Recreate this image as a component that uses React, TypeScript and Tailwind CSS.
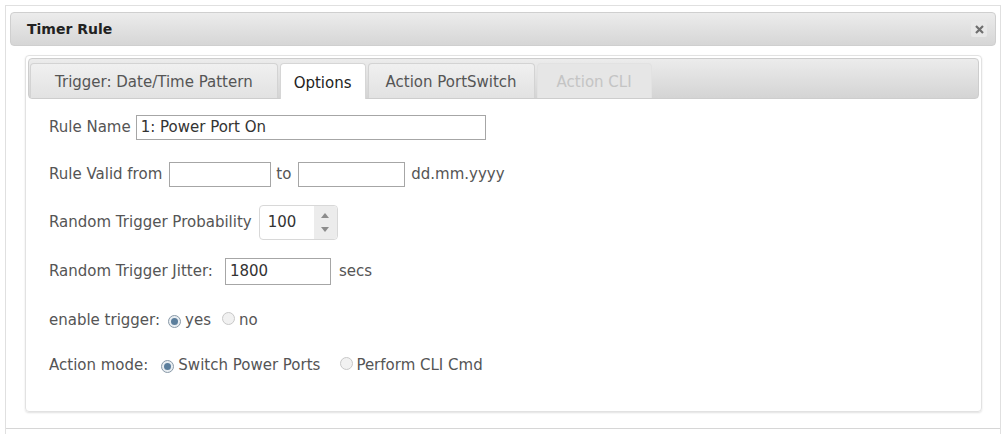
import React from "react";

const FONT = "font-['DejaVu_Sans',Verdana,sans-serif]";

function Radio({ checked }: { checked?: boolean }) {
  return (
    <span
      className={
        "inline-flex size-[13px] shrink-0 items-center justify-center rounded-full border " +
        (checked
          ? "border-[#8a9aa8] bg-[#e9eef2]"
          : "border-[#c8c8c8] bg-[#f1f1f1]")
      }
    >
      {checked && <span className="size-[7px] rounded-full bg-[#5b7e9c]" />}
    </span>
  );
}

function Tab({
  label,
  active,
  disabled,
  px,
}: {
  label: string;
  active?: boolean;
  disabled?: boolean;
  px: string;
}) {
  if (active) {
    return (
      <div
        className={
          "mb-[-1px] flex h-[36px] items-center rounded-t-[4px] border border-b-0 border-[#d6d6d6] bg-white pt-[3px] text-[#222] " +
          px
        }
      >
        {label}
      </div>
    );
  }
  return (
    <div
      className={
        "flex h-[35px] items-center rounded-t-[4px] border border-b-0 pt-[3px] " +
        px +
        " " +
        (disabled
          ? "border-[#e2e2e2] bg-[#e6e6e6] text-[#c4c4c4]"
          : "border-[#d3d3d3] bg-gradient-to-b from-[#f0f0f0] to-[#e2e2e2] text-[#555]")
      }
    >
      {label}
    </div>
  );
}

export default function App() {
  return (
    <div className={"h-[434px] w-[1006px] overflow-hidden bg-white pt-[5px] pl-[5px] " + FONT}>
      <div className="h-[440px] w-[996px] border border-[#e0e0e0] bg-white">
        {/* Title bar */}
        <div className="mx-[4px] mt-[6px] flex h-[34px] items-center justify-between rounded-[4px] border border-[#cfcfcf] bg-gradient-to-b from-[#ececec] to-[#d6d6d6] pr-[8px] pl-[16px]">
          <span className="text-[14px] font-bold text-[#222]">Timer Rule</span>
          <span className="flex size-[16px] items-center justify-center rounded-[2px] bg-[#e8e8e8]">
            <svg width="9" height="9" viewBox="0 0 9 9">
              <path d="M1 1 L8 8 M8 1 L1 8" stroke="#6f6f6f" strokeWidth="2.2" />
            </svg>
          </span>
        </div>

        {/* Tabs panel */}
        <div className="mt-[9px] ml-[19px] h-[357px] w-[957px] rounded-[4px] border border-[#e2e2e2] p-[2px] shadow-[0_1px_2px_rgba(0,0,0,0.12)]">
          <div className="flex h-[41px] items-end gap-[2px] rounded-[4px] border border-[#cdcdcd] bg-gradient-to-b from-[#ececec] to-[#d4d4d4] pl-[1px] text-[15px]">
            <Tab label="Trigger: Date/Time Pattern" px="px-[24px]" />
            <Tab label="Options" active px="px-[13px]" />
            <Tab label="Action PortSwitch" px="px-[17px]" />
            <Tab label="Action CLI" disabled px="px-[19px]" />
          </div>

          <div className="flex flex-col pt-[16px] pl-[21px] text-[15px] text-[#555]">
            <div className="flex h-[25px] items-center gap-[5px]">
              <span>Rule Name</span>
              <div className="flex h-[25px] w-[350px] items-center border border-[#a6a6a6] px-[4px] text-[#333]">
                1: Power Port On
              </div>
            </div>

            <div className="mt-[22px] flex h-[25px] items-center">
              <span>Rule Valid from</span>
              <div className="ml-[7px] h-[25px] w-[102px] border border-[#a6a6a6]" />
              <span className="ml-[5px]">to</span>
              <div className="ml-[7px] h-[25px] w-[107px] border border-[#a6a6a6]" />
              <span className="ml-[6px]">dd.mm.yyyy</span>
            </div>

            <div className="mt-[18px] flex h-[35px] items-center gap-[7px]">
              <span>Random Trigger Probability</span>
              <div className="flex h-[35px] w-[79px] rounded-[4px] border border-[#d8d8d8]">
                <div className="flex flex-1 items-center pl-[8px] text-[#333]">100</div>
                <div className="flex w-[23px] flex-col items-center justify-around rounded-r-[4px] bg-[#ececec] py-[3px]">
                  <svg width="8" height="5" viewBox="0 0 8 5">
                    <path d="M0 5 L4 0 L8 5 Z" fill="#8c8c8c" />
                  </svg>
                  <svg width="8" height="5" viewBox="0 0 8 5">
                    <path d="M0 0 L8 0 L4 5 Z" fill="#8c8c8c" />
                  </svg>
                </div>
              </div>
            </div>

            <div className="mt-[18px] flex h-[27px] items-center">
              <span>Random Trigger Jitter:</span>
              <div className="ml-[12px] flex h-[27px] w-[106px] items-center border border-[#a6a6a6] px-[4px] text-[#333]">
                1800
              </div>
              <span className="ml-[8px]">secs</span>
            </div>

            <div className="mt-[25px] flex h-[20px] items-center">
              <span>enable trigger:</span>
              <span className="ml-[8px]">
                <Radio checked />
              </span>
              <span className="ml-[4px]">yes</span>
              <span className="ml-[11px]">
                <Radio />
              </span>
              <span className="ml-[4px]">no</span>
            </div>

            <div className="mt-[25px] flex h-[20px] items-center">
              <span>Action mode:</span>
              <span className="ml-[13px]">
                <Radio checked />
              </span>
              <span className="ml-[4px]">Switch Power Ports</span>
              <span className="ml-[20px]">
                <Radio />
              </span>
              <span className="ml-[3px]">Perform CLI Cmd</span>
            </div>
          </div>
        </div>

        {/* Button pane separator */}
        <div className="mt-[16px] border-t border-[#d6d6d6]" />
      </div>
    </div>
  );
}
